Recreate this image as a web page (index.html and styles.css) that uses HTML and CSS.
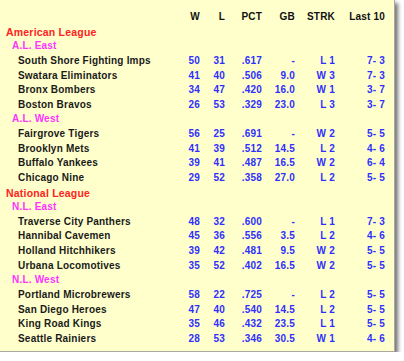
FILE: index.html
```html
<!DOCTYPE html>
<html>
<head>
<meta charset="utf-8">
<link rel="stylesheet" href="styles.css">
</head>
<body>
<div class="panel">
  <div class="table">
    <div class="hd name"></div><div class="hd">W</div><div class="hd">L</div><div class="hd">PCT</div><div class="hd">GB</div><div class="hd">STRK</div><div class="hd">Last 10</div>

    <div class="league">American League</div>
    <div class="division">A.L. East</div>
    <div class="team">South Shore Fighting Imps</div><div class="n">50</div><div class="n">31</div><div class="n">.617</div><div class="n">-</div><div class="n">L 1</div><div class="n">7- 3</div>
    <div class="team">Swatara Eliminators</div><div class="n">41</div><div class="n">40</div><div class="n">.506</div><div class="n">9.0</div><div class="n">W 3</div><div class="n">7- 3</div>
    <div class="team">Bronx Bombers</div><div class="n">34</div><div class="n">47</div><div class="n">.420</div><div class="n">16.0</div><div class="n">W 1</div><div class="n">3- 7</div>
    <div class="team">Boston Bravos</div><div class="n">26</div><div class="n">53</div><div class="n">.329</div><div class="n">23.0</div><div class="n">L 3</div><div class="n">3- 7</div>
    <div class="division">A.L. West</div>
    <div class="team">Fairgrove Tigers</div><div class="n">56</div><div class="n">25</div><div class="n">.691</div><div class="n">-</div><div class="n">W 2</div><div class="n">5- 5</div>
    <div class="team">Brooklyn Mets</div><div class="n">41</div><div class="n">39</div><div class="n">.512</div><div class="n">14.5</div><div class="n">L 2</div><div class="n">4- 6</div>
    <div class="team">Buffalo Yankees</div><div class="n">39</div><div class="n">41</div><div class="n">.487</div><div class="n">16.5</div><div class="n">W 2</div><div class="n">6- 4</div>
    <div class="team">Chicago Nine</div><div class="n">29</div><div class="n">52</div><div class="n">.358</div><div class="n">27.0</div><div class="n">L 2</div><div class="n">5- 5</div>

    <div class="league">National League</div>
    <div class="division">N.L. East</div>
    <div class="team">Traverse City Panthers</div><div class="n">48</div><div class="n">32</div><div class="n">.600</div><div class="n">-</div><div class="n">L 1</div><div class="n">7- 3</div>
    <div class="team">Hannibal Cavemen</div><div class="n">45</div><div class="n">36</div><div class="n">.556</div><div class="n">3.5</div><div class="n">L 2</div><div class="n">4- 6</div>
    <div class="team">Holland Hitchhikers</div><div class="n">39</div><div class="n">42</div><div class="n">.481</div><div class="n">9.5</div><div class="n">W 2</div><div class="n">5- 5</div>
    <div class="team">Urbana Locomotives</div><div class="n">35</div><div class="n">52</div><div class="n">.402</div><div class="n">16.5</div><div class="n">W 2</div><div class="n">5- 5</div>
    <div class="division">N.L. West</div>
    <div class="team">Portland Microbrewers</div><div class="n">58</div><div class="n">22</div><div class="n">.725</div><div class="n">-</div><div class="n">L 2</div><div class="n">5- 5</div>
    <div class="team">San Diego Heroes</div><div class="n">47</div><div class="n">40</div><div class="n">.540</div><div class="n">14.5</div><div class="n">L 2</div><div class="n">5- 5</div>
    <div class="team">King Road Kings</div><div class="n">35</div><div class="n">46</div><div class="n">.432</div><div class="n">23.5</div><div class="n">L 1</div><div class="n">5- 5</div>
    <div class="team">Seattle Rainiers</div><div class="n">28</div><div class="n">53</div><div class="n">.346</div><div class="n">30.5</div><div class="n">W 1</div><div class="n">4- 6</div>
  </div>
</div>
</body>
</html>
```

FILE: styles.css
```css
html, body {
  margin: 0;
  padding: 0;
  background: #ffffff;
}
.panel {
  width: 395px;
  height: 352px;
  box-sizing: border-box;
  background: #ffffcc;
  border-right: 1px solid #a8a8a0;
  border-bottom: 1px solid #a8a8a0;
  box-shadow: 3px 3px 4px rgba(0, 0, 0, 0.55);
  padding: 10px 10px 0 0;
  font-family: "Liberation Sans", Arial, sans-serif;
  font-weight: bold;
  font-size: 10px;
  letter-spacing: 0.2px;
}
.table {
  display: grid;
  grid-template-columns: 170px 30px 25px 37px 33px 40px 50px;
  grid-auto-rows: 14.64px;
  align-items: center;
}
.table > div {
  text-align: right;
  white-space: nowrap;
  line-height: 14.64px;
}
.hd { color: #111111; }
.table > .name { text-align: left; }
.league {
  grid-column: 1 / -1;
  text-align: left !important;
  color: #ff2222;
  font-size: 10.5px;
  padding-left: 6px;
}
.division {
  grid-column: 1 / -1;
  text-align: left !important;
  color: #ff33ff;
  padding-left: 12px;
}
.team {
  text-align: left !important;
  color: #1a1a1a;
  padding-left: 18px;
}
.n { color: #2f2fff; }
```
